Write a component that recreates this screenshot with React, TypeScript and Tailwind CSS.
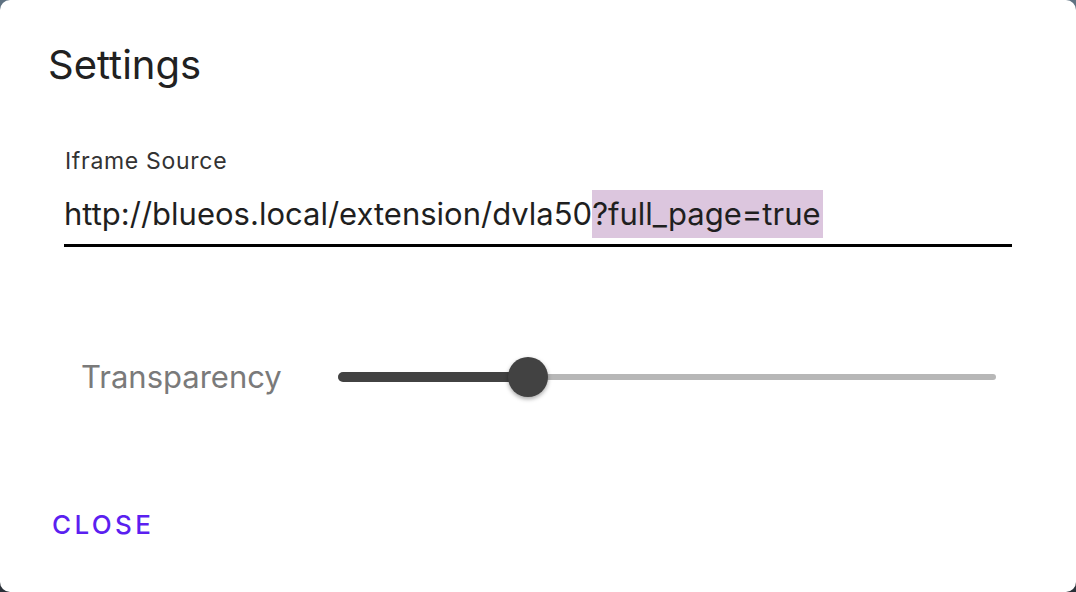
import React from "react";

export default function App() {
  return (
    <div
      className="w-[1076px] h-[592px] bg-gradient-to-b from-[#5f7282] to-[#2a3038]"
      style={{ fontFamily: "Inter, 'Noto Sans', sans-serif" }}
    >
      <div className="w-full h-full rounded-[10px] bg-white flex flex-col">
        <div className="pl-[48px] pt-[40px] text-[40px] leading-[50px] text-[#212121]">Settings</div>

        <div className="mx-[64px] mt-[58px] flex flex-col">
          <div className="text-[23px] leading-[26px] tracking-[0.03em] text-[#333] pl-[1px]">Iframe Source</div>
          <div className="mt-[16px] pb-[6px] flex items-center text-[31px] text-[#1f1f1f] border-b-[3px] border-black">
            <span className="h-[48px] flex items-center">http://blueos.local/extension/dvla50</span>
            <span className="h-[48px] flex items-center bg-[#dcc6de] pr-[2px]">?full_page=true</span>
          </div>
        </div>

        <div className="mt-[108px] pl-[81px] pr-[80px] flex items-center h-[44px]">
          <div className="w-[257px] text-[31px] text-[#7a7a7a]">Transparency</div>
          <div className="flex-1 relative h-[40px] flex items-center">
            <div className="h-[6px] w-full rounded-full bg-[#b7b7b7]" />
            <div className="absolute left-0 h-[10px] w-[190px] rounded-full bg-[#424242]" />
            <div className="absolute left-[170px] w-[40px] h-[40px] rounded-full bg-[#424242] shadow-[0_2px_4px_rgba(0,0,0,0.35)]" />
          </div>
        </div>

        <div className="mt-[110px] pl-[52px] leading-[32px]">
          <span className="text-[26px] font-medium tracking-[0.13em] text-[#5b1ff0]">CLOSE</span>
        </div>
      </div>
    </div>
  );
}
